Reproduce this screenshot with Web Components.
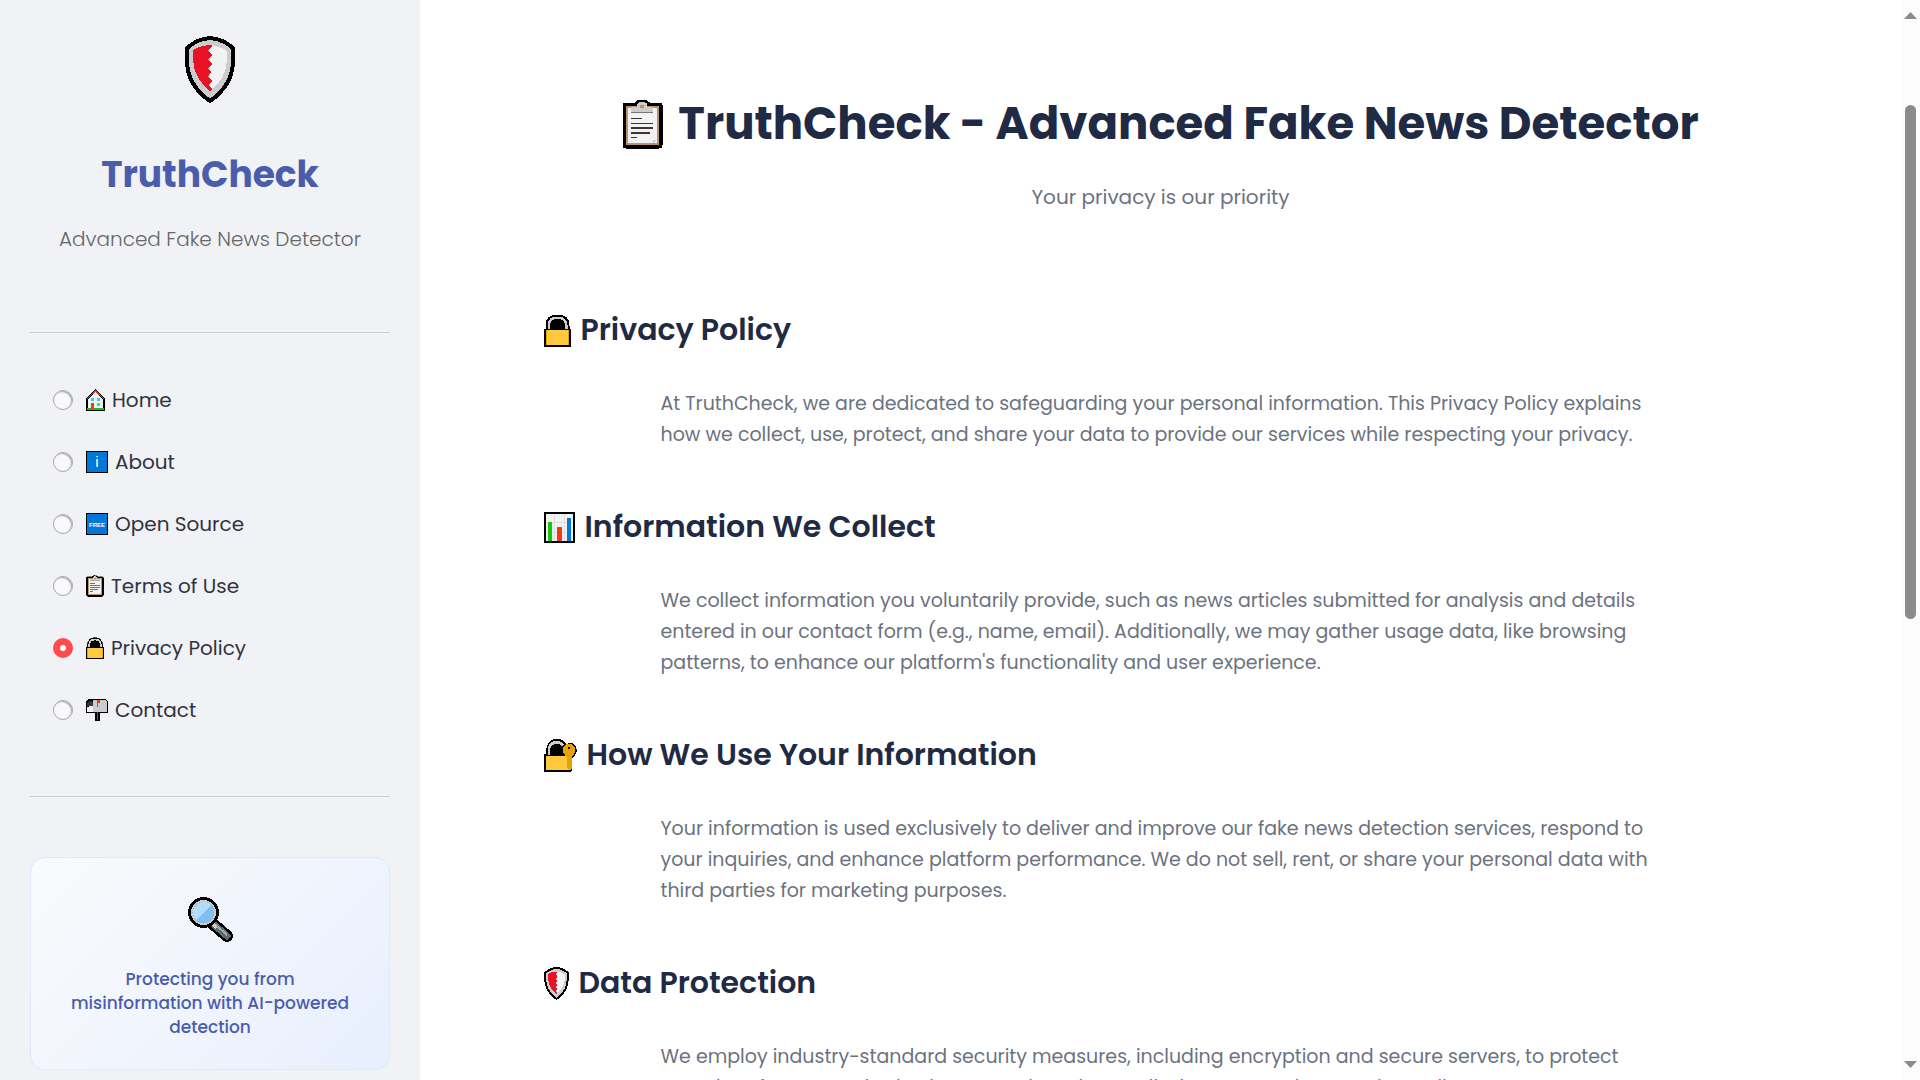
<!DOCTYPE html>
<html lang="en">
<head>
<meta charset="utf-8">
<title>TruthCheck - Privacy Policy</title>
<style>
  body {
    margin: 0;
    font-family: Poppins, Inter, "Liberation Sans", sans-serif;
    background: #fff;
    color: #31333f;
  }
</style>
</head>
<body>
<app-shell>
  <side-bar slot="sidebar">
    <brand-header name="TruthCheck" tagline="Advanced Fake News Detector"></brand-header>
    <side-nav selected="privacy"></side-nav>
    <promo-card>Protecting you from misinformation with AI-powered detection</promo-card>
  </side-bar>
  <page-header icon="clipboard">
    TruthCheck - Advanced Fake News Detector
    <span slot="subtitle">Your privacy is our priority</span>
  </page-header>
  <policy-section icon="lock" heading="Privacy Policy">
    At TruthCheck, we are dedicated to safeguarding your personal information. This Privacy Policy explains how we collect, use, protect, and share your data to provide our services while respecting your privacy.
  </policy-section>
  <policy-section icon="chart" heading="Information We Collect">
    We collect information you voluntarily provide, such as news articles submitted for analysis and details entered in our contact form (e.g., name, email). Additionally, we may gather usage data, like browsing patterns, to enhance our platform's functionality and user experience.
  </policy-section>
  <policy-section icon="lockkey" heading="How We Use Your Information">
    Your information is used exclusively to deliver and improve our fake news detection services, respond to your inquiries, and enhance platform performance. We do not sell, rent, or share your personal data with third parties for marketing purposes.
  </policy-section>
  <policy-section icon="shield" heading="Data Protection">
    We employ industry-standard security measures, including encryption and secure servers, to protect your data from unauthorized access, alteration, or disclosure. Regular security audits
  </policy-section>
</app-shell>

<script>
// each icon: [width, height, markup]
const ICONS = {
  shield: [50, 67, `
    <path d="M25 2Q38 3 48 12V24C48 42 38 56 25 65C12 56 2 42 2 24V12Q12 3 25 2Z" fill="#ccc" stroke="#000" stroke-width="4"/>
    <path d="M25 9Q35 10 42 15V24C41 38 35 48 25 55Z" fill="#f2f2f2"/>
    <path d="M27 9Q16 9 8 14V24C9 38 15 47 25 55L27 53L23 49L27 45L23 41L26 36L23 32L27 28L23 24L27 19L23 15L27 10Z" fill="#e81224"/>`],
  clipboard: [41, 50, `
    <path d="M3 4H13Q15 4 15 2Q20 0 25 2Q25 4 28 4H38Q40 4 40 6V46Q40 49 37 49H4Q1 49 1 46V6Q1 4 3 4Z" fill="#000" stroke="#000"/>
    <path d="M4 7H37V46H4Z" fill="#ba9368"/>
    <path d="M6 9H35V44H6Z" fill="#f2f2f2"/>
    <path d="M9 8H15V6Q15 3 20 3Q25 3 25 6V8H31V13H9Z" fill="#ccc"/>
    <path d="M18 6H22V9H18Z" fill="#ba9368"/>
    <path d="M9 13.5H31" stroke="#777" stroke-width="1"/>
    <path d="M9 19.5H20M9 24.5H31M9 29H31M9 34H28M9 38.5H15" stroke="#3f3538" stroke-width="1.6"/>
    <path d="M31 44V41H35Z" fill="#ccc"/>`],
  lock: [27, 33, `
    <path d="M2 17V12Q2 1 13.5 1Q25 1 25 12V17" fill="#000" stroke="#000"/>
    <path d="M3.5 17V11Q4 2.5 13.5 2.5Q23 2.5 23.5 11V17H21V12Q21 5 13.5 5Q6 5 6 12V17Z" fill="#ccc"/>
    <rect y="15" width="27" height="18" rx="1" fill="#000"/>
    <rect x="2" y="16" width="23" height="15" fill="#e8a200"/>
    <rect x="3" y="16" width="21" height="15" fill="#ffc83d"/>`],
  lockkey: [33, 33, `
    <path d="M2 17V12Q3 0 13 0Q20 0 22 5Q27 3 30 5Q33 8 33 12Q32 16 28 19V31Q28 33 26 33H0V15H2Z" fill="#000"/>
    <path d="M3.500 16V11Q4 2 13 2Q18 2 20 6L18 7Q16 5 13 5Q6 5 6 12V16Z" fill="#ccc"/>
    <path d="M2 17H26V31H2Z" fill="#ffc83d"/>
    <path d="M21 6Q25 4 29 6Q32 8 31 12Q31 15 28 17V29L26 31L23 29V18Q19 15 19 11Q19 8 21 6Z" fill="#e8a200"/>
    <rect x="24" y="8" width="2" height="2" fill="#000"/>`],
  chart: [31, 31, `
    <rect width="31" height="31" fill="#000"/>
    <rect x="2" y="2" width="27" height="27" fill="#f2f2f2"/>
    <path d="M10.500 2V29M20.500 2V29M2 10.500H29M2 20.500H29" stroke="#dedede" stroke-width="1"/>
    <rect x="4" y="10" width="4" height="19" fill="#16c60c"/>
    <rect x="13" y="15" width="5" height="14" fill="#f03a17"/>
    <rect x="23" y="6" width="4" height="23" fill="#0078d7"/>`],
  house: [19, 22, `
    <path d="M9.500 0L19 9V22H0V9Z" fill="#000"/>
    <path d="M9.500 3L17 10V19H2V10Z" fill="#f2f2f2"/>
    <path d="M1 10L9.500 2L18 10" fill="none" stroke="#f03a17" stroke-width="1"/>
    <path d="M1 19H18V21H1Z" fill="#16c60c"/>
    <path d="M5 9H8V12H5ZM11 9H14V12H11ZM11 14H14V17H11Z" fill="#31d2f7"/>
    <path d="M5 14H8V20H5Z" fill="#f03a17"/>`],
  info: [22, 22, `
    <rect width="22" height="22" fill="#000"/>
    <rect x="1" y="1" width="20" height="20" fill="#0078d7"/>
    <text x="11" y="16" fill="#fff" font-family="Liberation Sans" font-size="15" text-anchor="middle">i</text>`],
  free: [22, 22, `
    <rect width="22" height="22" fill="#000"/>
    <rect x="1" y="1" width="20" height="20" fill="#0078d7"/>
    <text x="11" y="14" fill="#fff" font-family="Liberation Sans" font-size="6" font-weight="700" text-anchor="middle">FREE</text>`],
  mailbox: [22, 22, `
    <path d="M2 0H19L22 3V14H14V22H9V14H0V3Z" fill="#000"/>
    <path d="M7 1H19L21 3V13H7Z" fill="#ccc"/>
    <path d="M1 4L3 2H5L7 4V7H1Z" fill="#383838"/>
    <path d="M1 8L5 7H7V13H1Z" fill="#f2f2f2"/>
    <path d="M11 13H12V21H11Z" fill="#8e562e"/>
    <path d="M11 1H14V4H12V8H11Z" fill="#f03a17"/>`],
  magnifier: [45, 45, `
    <path d="M25 27L39 39" stroke="#000" stroke-width="12" stroke-linecap="round"/>
    <path d="M24 26L39 39" stroke="#5a6b70" stroke-width="7" stroke-linecap="round"/>
    <path d="M24 26L29 31" stroke="#ccc" stroke-width="4"/>
    <path d="M28 28L39 38" stroke="#9fadb1" stroke-width="2"/>
    <circle cx="15.500" cy="15.500" r="14" fill="#ccc" stroke="#000" stroke-width="3"/>
    <circle cx="15.500" cy="15.500" r="11" fill="#83beec"/>
    <path d="M8 23A10 10 0 0 1 23 8Z" fill="#b4dcf4"/>`]
};

class AppIcon extends HTMLElement {
  constructor() {
    super();
    this.attachShadow({ mode: 'open' });
  }

  connectedCallback() {
    const [w, h, markup] = ICONS[this.getAttribute('name')];
    const height = this.getAttribute('height') || h;
    this.shadowRoot.innerHTML = `
      <style>
        :host { display: inline-flex; flex: none; }
        svg { display: block; shape-rendering: crispEdges; }
      </style>
      <svg viewBox="0 0 ${w} ${h}" width="${Math.round(w * height / h)}" height="${height}" aria-hidden="true">${markup}</svg>
    `;
  }
}
customElements.define('app-icon', AppIcon);

class AppShell extends HTMLElement {
  constructor() {
    super();
    this.attachShadow({ mode: 'open' });
    this.shadowRoot.innerHTML = `
      <style>
        :host {
          display: flex;
          height: 100vh;
          overflow: hidden;
        }
        main {
          flex: 1;
          min-width: 0;
          overflow: hidden;
          padding: 97px 40px 0;
        }
        .content {
          max-width: 1234px;
          margin: 0 auto;
        }
      </style>
      <slot name="sidebar"></slot>
      <main><div class="content"><slot></slot></div></main>
      <scroll-rail></scroll-rail>
    `;
  }
}
customElements.define('app-shell', AppShell);

class ScrollRail extends HTMLElement {
  constructor() {
    super();
    this.attachShadow({ mode: 'open' });
    this.shadowRoot.innerHTML = `
      <style>
        :host {
          display: flex;
          flex-direction: column;
          align-items: center;
          flex: none;
          width: 19px;
          box-sizing: border-box;
          padding: 12px 0;
          background: #fcfcfc;
        }
        svg { display: block; fill: #8b8b8b; }
        .track {
          flex: 1;
          display: flex;
          flex-direction: column;
          align-items: center;
        }
        .before { flex: 86; }
        .thumb {
          flex: 514;
          width: 11px;
          border-radius: 6px;
          background: #8b8b8b;
        }
        .after { flex: 442; }
      </style>
      <svg width="13" height="7" viewBox="0 0 13 7"><path d="M6.500 0L13 7H0Z"/></svg>
      <div class="track"><div class="before"></div><div class="thumb"></div><div class="after"></div></div>
      <svg width="13" height="7" viewBox="0 0 13 7"><path d="M0 0H13L6.500 7Z"/></svg>
    `;
  }
}
customElements.define('scroll-rail', ScrollRail);

class SideBar extends HTMLElement {
  constructor() {
    super();
    this.attachShadow({ mode: 'open' });
    this.shadowRoot.innerHTML = `
      <style>
        :host {
          display: block;
          flex: none;
          width: 420px;
          box-sizing: border-box;
          padding: 36px 30px 0;
          background: #f0f2f6;
        }
      </style>
      <slot></slot>
    `;
  }
}
customElements.define('side-bar', SideBar);

class BrandHeader extends HTMLElement {
  constructor() {
    super();
    this.attachShadow({ mode: 'open' });
  }

  connectedCallback() {
    this.shadowRoot.innerHTML = `
      <style>
        :host {
          display: flex;
          flex-direction: column;
          align-items: center;
          padding-bottom: 78px;
          border-bottom: 1px solid #cbcdd2;
        }
        h2 {
          margin: 50px 0 27px;
          font-size: 36px;
          line-height: 44px;
          font-weight: 700;
          color: #4a5dab;
        }
        p {
          margin: 0;
          font-size: 20px;
          line-height: 30px;
          font-weight: 300;
          color: #666;
        }
      </style>
      <app-icon name="shield"></app-icon>
      <h2>${this.getAttribute('name')}</h2>
      <p>${this.getAttribute('tagline')}</p>
    `;
  }
}
customElements.define('brand-header', BrandHeader);

class SideNav extends HTMLElement {
  constructor() {
    super();
    this.attachShadow({ mode: 'open' });
    this.items = [
      ['home', 'house', 'Home'],
      ['about', 'info', 'About'],
      ['source', 'free', 'Open Source'],
      ['terms', 'clipboard', 'Terms of Use'],
      ['privacy', 'lock', 'Privacy Policy'],
      ['contact', 'mailbox', 'Contact']
    ];
  }

  connectedCallback() {
    const selected = this.getAttribute('selected');
    this.shadowRoot.innerHTML = `
      <style>
        :host {
          display: block;
          padding: 52px 0 71px 23px;
          border-bottom: 1px solid #cbcdd2;
        }
        nav {
          display: flex;
          flex-direction: column;
          gap: 32px;
        }
        label {
          display: flex;
          align-items: center;
          height: 30px;
          font-size: 20px;
          line-height: 30px;
          cursor: pointer;
        }
        input {
          appearance: none;
          flex: none;
          width: 20px;
          height: 20px;
          margin: 0 13px 0 0;
          border: 1px solid #a7a8b0;
          border-radius: 50%;
          background: #f9f9fc;
          box-shadow: inset -1px 1px 1px #a7a8b0;
        }
        input:checked {
          border: 7px solid #ff4b4b;
          background: #fff;
          box-shadow: none;
        }
        app-icon { margin-right: 7px; }
      </style>
      <nav aria-label="Pages">
        ${this.items.map(([id, icon, text]) => `
          <label for="${id}">
            <input type="radio" name="page" id="${id}" value="${id}" ${id === selected ? 'checked' : ''}>
            <app-icon name="${icon}" height="22"></app-icon>
            <span>${text}</span>
          </label>
        `).join('')}
      </nav>
    `;
  }
}
customElements.define('side-nav', SideNav);

class PromoCard extends HTMLElement {
  constructor() {
    super();
    this.attachShadow({ mode: 'open' });
    this.shadowRoot.innerHTML = `
      <style>
        :host {
          display: flex;
          flex-direction: column;
          align-items: center;
          margin-top: 60px;
          padding: 39px 30px 30px;
          border: 1px solid #e0e7ff;
          border-radius: 15px;
          background: linear-gradient(135deg, #f9fafc 0%, #f1f5fd 50%, #e7eefe 100%);
        }
        p {
          margin: 25px 0 0;
          font-size: 17px;
          line-height: 24px;
          font-weight: 500;
          text-align: center;
          color: #4a5dab;
        }
      </style>
      <app-icon name="magnifier"></app-icon>
      <p><slot></slot></p>
    `;
  }
}
customElements.define('promo-card', PromoCard);

class PageHeader extends HTMLElement {
  constructor() {
    super();
    this.attachShadow({ mode: 'open' });
  }

  connectedCallback() {
    this.shadowRoot.innerHTML = `
      <style>
        :host {
          display: block;
          margin-bottom: 100px;
        }
        h1 {
          display: flex;
          justify-content: center;
          align-items: center;
          gap: 15px;
          margin: 0 0 31px;
          font-size: 45px;
          line-height: 54px;
          font-weight: 700;
          color: #1f2a44;
        }
        p {
          margin: 0;
          font-size: 20px;
          line-height: 30px;
          text-align: center;
          color: #6b7280;
        }
      </style>
      <h1><app-icon name="${this.getAttribute('icon')}" height="50"></app-icon><span><slot></slot></span></h1>
      <p><slot name="subtitle"></slot></p>
    `;
  }
}
customElements.define('page-header', PageHeader);

class PolicySection extends HTMLElement {
  constructor() {
    super();
    this.attachShadow({ mode: 'open' });
  }

  connectedCallback() {
    const icon = this.getAttribute('icon');
    this.shadowRoot.innerHTML = `
      <style>
        :host {
          display: block;
          margin-bottom: 59px;
        }
        h2 {
          display: flex;
          align-items: center;
          gap: 10px;
          margin: 0 0 40px;
          font-size: 30px;
          line-height: 36px;
          font-weight: 600;
          color: #1f2a44;
        }
        p {
          max-width: 1000px;
          margin: 0 auto;
          font-size: 19px;
          line-height: 31px;
          color: #6b7280;
        }
      </style>
      <h2><app-icon name="${icon}" height="${icon === 'chart' ? 31 : 33}"></app-icon>${this.getAttribute('heading')}</h2>
      <p><slot></slot></p>
    `;
  }
}
customElements.define('policy-section', PolicySection);
</script>
</body>
</html>
